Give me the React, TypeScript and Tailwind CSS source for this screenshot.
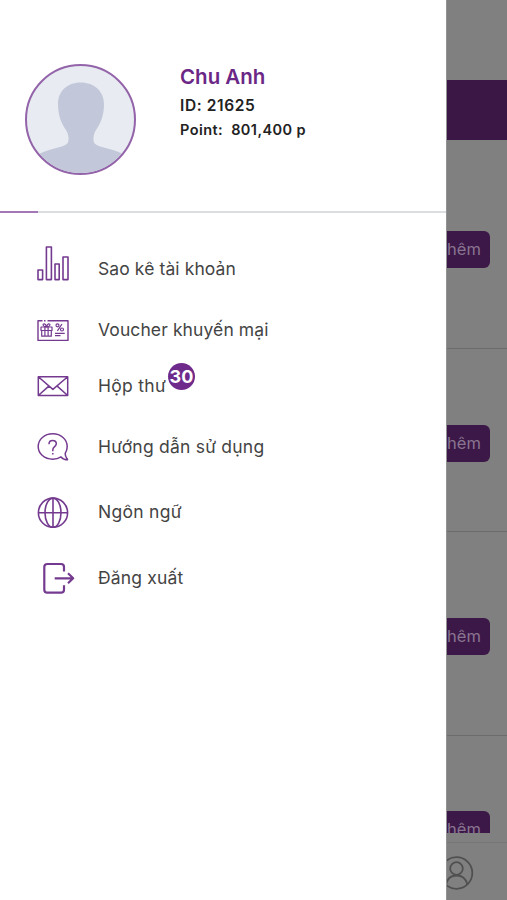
import type { ReactNode } from "react";

type MenuItem = {
  label: string;
  height: string;
  tracking: string;
  icon: ReactNode;
  badge?: number;
};

function MenuIcon({ children, strokeWidth = 1.5 }: { children: ReactNode; strokeWidth?: number }) {
  return (
    <svg
      viewBox="0 0 48 48"
      className="h-12 w-12 shrink-0 text-[#743a90]"
      fill="none"
      stroke="currentColor"
      strokeWidth={strokeWidth}
      strokeLinejoin="round"
    >
      {children}
    </svg>
  );
}

const menuItems: MenuItem[] = [
  {
    label: "Sao kê tài khoản",
    height: "h-[60px]",
    tracking: "tracking-[0.1px]",
    icon: (
      <MenuIcon strokeWidth={1.6}>
        <rect x="5" y="25" width="4.6" height="9.6" />
        <rect x="13.4" y="2" width="5" height="32.6" />
        <rect x="22" y="19" width="4.2" height="15.6" />
        <rect x="30" y="12" width="5" height="22.6" />
      </MenuIcon>
    ),
  },
  {
    label: "Voucher khuyến mại",
    height: "h-[62px]",
    tracking: "tracking-[0.1px]",
    icon: (
      <MenuIcon strokeWidth={1.4}>
        <path d="M9.5 14.8H5v19.6h30V14.8H14.5M11 14.8h1.5" />
        <g strokeWidth="1.2">
          <path d="M8 21h11v3.500H8zM8.700 24.500v5.700h9.600v-5.700M11.900 21v9.200M15.100 21v9.200" />
          <path d="M13.500 21c-4.200-.3-4.200-3.500-2-3.200 1.200.2 2 3.200 2 3.200s.8-3 2-3.200c2.200-.3 2.200 2.900-2 3.200" />
          <circle cx="24.500" cy="19.300" r="1.500" />
          <circle cx="29" cy="23.500" r="1.500" />
          <path d="M29 18l-4.600 6.800M22 27.300h9.700M22 29.700h5.500" />
        </g>
      </MenuIcon>
    ),
  },
  {
    label: "Hộp thư",
    height: "h-[50px]",
    tracking: "tracking-[0.3px]",
    badge: 30,
    icon: (
      <MenuIcon>
        <path d="M5.3 14.8h29.4v18.7H5.3zM5.3 14.8l14.6 12.6 14.8-12.6M5.3 33.5l10.5-9.4M34.7 33.5l-10.500-9.400" />
      </MenuIcon>
    ),
  },
  {
    label: "Hướng dẫn sử dụng",
    height: "h-[72px]",
    tracking: "tracking-[0.22px]",
    icon: (
      <MenuIcon>
        <path d="M19.7 10.8C11.5 10.8 5.2 16.3 5.2 23.5s6.3 12.7 14.5 12.7c3.3 0 6-.8 8.3-2.3 1.5 1.7 3.8 2.9 6.5 2.9.3-.5-.2-1-.9-1.9-.9-1.3-1.4-2.8-1.4-4.5 1.3-2 2-4.3 2-6.9 0-7.200-6.300-12.700-14.500-12.700z" />
        <path d="M16 21.2c0-2.200 1.500-3.700 3.700-3.700s3.600 1.400 3.600 3.300c0 2.900-3.500 2.800-3.500 6v1.500M19.800 30v1.600" />
      </MenuIcon>
    ),
  },
  {
    label: "Ngôn ngữ",
    height: "h-[58px]",
    tracking: "tracking-[0.28px]",
    icon: (
      <MenuIcon strokeWidth={1.6}>
        <circle cx="20" cy="24.7" r="14.6" />
        <ellipse cx="20" cy="24.7" rx="8" ry="14.6" />
        <path d="M20 10v29.4M5.3 24.7h29.4" />
      </MenuIcon>
    ),
  },
  {
    label: "Đăng xuất",
    height: "h-[74px]",
    tracking: "tracking-[0.15px]",
    icon: (
      <MenuIcon strokeWidth={2.2}>
        <path d="M31 17.5v-4.5q0-3-3-3H14.3q-3 0-3 3v22.7q0 3 3 3H28q3 0 3-3v-4.500" />
        <path d="M21.7 24.3h18.500M35 19.300l5.200 5-5.200 5" />
      </MenuIcon>
    ),
  },
];

function Avatar() {
  return (
    <div className="h-[111px] w-[111px] overflow-hidden rounded-full border-2 border-[#9364aa] bg-[#e8ebf1]">
      <svg viewBox="0 0 107 107" className="h-full w-full" fill="#c2c8d9">
        <path d="M53.7 16.5C40 16.5 31 25.5 31 38c0 12 3.5 19.5 8 26 2.500 4 3 8 2.200 12-1 3-6 4.500-11 5.800-6 1.600-12 3-17.200 5.700V107h82V87.500c-5.200-2.700-11.200-4.100-17.200-5.700-5-1.300-10-2.800-11-5.800-.8-4-.3-8 2.200-12 4.500-6.500 8-14 8-26 0-12.500-9.600-21.500-23.300-21.500z" />
      </svg>
    </div>
  );
}

function Drawer() {
  return (
    <aside className="flex h-full w-[446px] shrink-0 flex-col bg-white">
      <header className="flex h-[211px] gap-[44px] pl-[25px] pt-[64px]">
        <Avatar />
        <div className="whitespace-pre text-[#222]">
          <h1 className="text-[20.5px] leading-[26px] font-semibold text-[#6b2786]">Chu Anh</h1>
          <p className="mt-1 text-[15.5px] leading-6 font-semibold tracking-[0.6px]">ID: 21625</p>
          <p className="text-[14.5px] leading-6 font-semibold tracking-[0.42px]">Point:  801,400 p</p>
        </div>
      </header>
      <div className="h-[2px] bg-[#dcdde0]">
        <div className="h-full w-[38px] bg-[#a377b5]" />
      </div>
      <nav className="pt-[26px] pl-[33px]">
        {menuItems.map((item) => (
          <div key={item.label} className={`flex items-center ${item.height}`}>
            {item.icon}
            <span
              className={`relative ml-[17px] text-[17.5px] leading-6 whitespace-nowrap text-[#444] ${item.tracking}`}
            >
              {item.label}
              {item.badge && (
                <span className="absolute -top-[11px] left-[70px] flex h-[27px] w-[27px] items-center justify-center rounded-full bg-[#6f2b8c] text-[18px] font-bold tracking-normal text-white">
                  {item.badge}
                </span>
              )}
            </span>
          </div>
        ))}
      </nav>
    </aside>
  );
}

function MoreButton() {
  return (
    <div className="flex h-[36.5px] w-[43px] shrink-0 items-center rounded-r-[6px] bg-[#3c1848] text-[16.5px] text-[#8a7591]">
      hêm
    </div>
  );
}

// Dimmed page that shows beside the open drawer
function PageBehind() {
  return (
    <main className="flex h-full min-w-0 flex-1 flex-col overflow-hidden border-l border-[#929292] bg-[#808080]">
      <div className="h-20 shrink-0" />
      <div className="h-[60px] shrink-0 bg-[#3b1745]" />
      <div className="h-[209px] shrink-0 border-b border-[#6c6c6c] pt-[91px]">
        <MoreButton />
      </div>
      <div className="h-[183px] shrink-0 border-b border-[#6c6c6c] pt-[76px]">
        <MoreButton />
      </div>
      <div className="h-[204px] shrink-0 border-b border-[#6c6c6c] pt-[86px]">
        <MoreButton />
      </div>
      <div className="h-[97px] shrink-0 overflow-hidden pt-[75px]">
        <MoreButton />
      </div>
      <div className="mt-[9px] flex flex-1 border-t border-[#767676] pt-[12px]">
        <svg viewBox="0 0 28 36" className="h-9 w-7" fill="none" stroke="#505050" strokeWidth="1.8">
          <circle cx="9.5" cy="18" r="15.8" />
          <circle cx="9.5" cy="13.5" r="6.3" />
          <path d="M-1 30c1-6 5-9.5 10.500-9.500S19 24 20.500 29.500" />
        </svg>
      </div>
    </main>
  );
}

export default function App() {
  return (
    <div className="flex h-[900px] w-[507px] overflow-hidden bg-white font-['Inter',sans-serif]">
      <Drawer />
      <PageBehind />
    </div>
  );
}
